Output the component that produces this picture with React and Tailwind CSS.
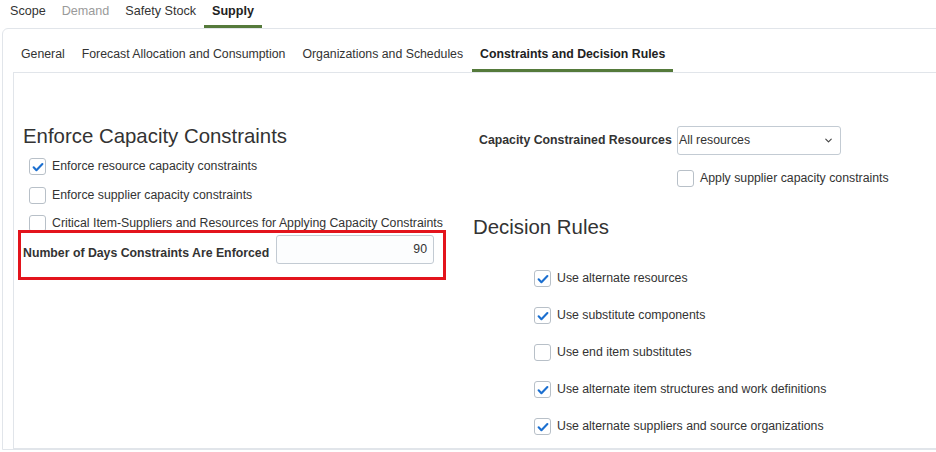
import { ChevronDown } from "lucide-react";

function Checkbox({ checked }) {
  return (
    <span className="flex h-[17px] w-[17px] shrink-0 items-center justify-center rounded-[3px] border border-[#b8c0c8] bg-white">
      {checked && (
        <svg viewBox="0 0 16 16" className="h-[14px] w-[14px]">
          <path
            d="M3 8.4l3.2 3.2L13 4.6"
            fill="none"
            stroke="#1b6fd0"
            strokeWidth="2.4"
            strokeLinecap="round"
            strokeLinejoin="round"
          />
        </svg>
      )}
    </span>
  );
}

function CheckRow({ checked, label, className }) {
  return (
    <div className={`flex items-center gap-[6px] ${className}`}>
      <Checkbox checked={checked} />
      <span className="whitespace-nowrap text-[12.3px] leading-[17px] text-[#333]">{label}</span>
    </div>
  );
}

export default function App() {
  const topTabs = [
    { label: "Scope" },
    { label: "Demand", muted: true },
    { label: "Safety Stock" },
    { label: "Supply", active: true },
  ];
  const subTabs = [
    { label: "General" },
    { label: "Forecast Allocation and Consumption" },
    { label: "Organizations and Schedules" },
    { label: "Constraints and Decision Rules", active: true },
  ];
  const rules = [
    { label: "Use alternate resources", checked: true },
    { label: "Use substitute components", checked: true },
    { label: "Use end item substitutes", checked: false },
    { label: "Use alternate item structures and work definitions", checked: true },
    { label: "Use alternate suppliers and source organizations", checked: true },
  ];

  return (
    <div className="h-[452px] w-[936px] overflow-hidden bg-white font-['Liberation_Sans',Arial,sans-serif] text-[#333]">
      {/* Top tabs */}
      <div className="flex h-[28px] pl-[2px]">
        {topTabs.map((t) => (
          <div
            key={t.label}
            className={`flex items-start whitespace-nowrap px-2 pt-[1px] text-[12.6px] leading-[20px] ${
              t.active
                ? "border-b-[3px] border-[#557a3b] font-bold text-[#222]"
                : "border-b-[3px] border-transparent"
            } ${t.muted ? "text-[#9a9a9a]" : ""}`}
          >
            {t.label}
          </div>
        ))}
      </div>

      {/* Outer panel */}
      <div className="ml-[2px] w-[960px] rounded-tl-md border border-[#e1e5ea] pl-[10px]">
        {/* Sub tabs */}
        <div className="flex h-[44px] items-end gap-[1px] border-b border-[#e1e5ea]">
          {subTabs.map((t) => (
            <div
              key={t.label}
              className={`flex h-full items-end whitespace-nowrap px-2 pb-[5px] text-[12.3px] leading-[20px] ${
                t.active
                  ? "border-b-[3px] border-[#557a3b] font-bold text-[#222]"
                  : "border-b-[3px] border-transparent text-[#333]"
              }`}
            >
              {t.label}
            </div>
          ))}
        </div>

        {/* Inner panel */}
        <div className="flex h-[376px] border-b border-l border-[#e1e5ea]">
          {/* Left column */}
          <div className="flex w-[449px] flex-col pl-[9px] pt-[51px]">
            <h2 className="whitespace-nowrap text-[20.4px] leading-[24px] text-[#333]">Enforce Capacity Constraints</h2>
            <CheckRow className="ml-[6px] mt-[10px]" checked label="Enforce resource capacity constraints" />
            <CheckRow className="ml-[6px] mt-[12px]" checked={false} label="Enforce supplier capacity constraints" />
            <CheckRow className="ml-[6px] mt-[11px]" checked={false} label="Critical Item-Suppliers and Resources for Applying Capacity Constraints" />
            <div className="-ml-[5px] -mt-[2px] flex h-[50px] w-[428px] items-start border-[3px] border-[#e3141c] pl-[2px] pt-[2px]">
              <span className="mt-[10px] whitespace-nowrap text-[12.3px] font-bold leading-[17px] text-[#333]">
                Number of Days Constraints Are Enforced
              </span>
              <div className="ml-auto mr-[9px] flex h-[29px] w-[158px] items-center justify-end rounded-[3px] border border-[#c3cbd3] bg-[#fcfdfe] pr-[6px] text-[12.3px]">
                90
              </div>
            </div>
          </div>

          {/* Right column */}
          <div className="flex flex-col pl-[10px] pt-[53px]">
            <div className="flex items-center pl-[6px]">
              <span className="w-[192px] whitespace-nowrap text-[12.3px] font-bold text-[#333]">Capacity Constrained Resources</span>
              <div className="ml-[6px] flex h-[29px] w-[164px] items-center justify-between rounded-[3px] border border-[#c3cbd3] bg-white pl-[1px] pr-[6px] text-[12.3px]">
                <span>All resources</span>
                <ChevronDown className="h-[11px] w-[11px] text-[#444]" strokeWidth={2.5} />
              </div>
            </div>
            <CheckRow className="ml-[204px] mt-[15px]" checked={false} label="Apply supplier capacity constraints" />
            <h2 className="mt-[28px] whitespace-nowrap text-[20.4px] leading-[24px] text-[#333]">Decision Rules</h2>
            <div className="ml-[61px] mt-[31px] flex flex-col gap-[20px]">
              {rules.map((r) => (
                <CheckRow key={r.label} checked={r.checked} label={r.label} />
              ))}
            </div>
          </div>
        </div>
      </div>
    </div>
  );
}
